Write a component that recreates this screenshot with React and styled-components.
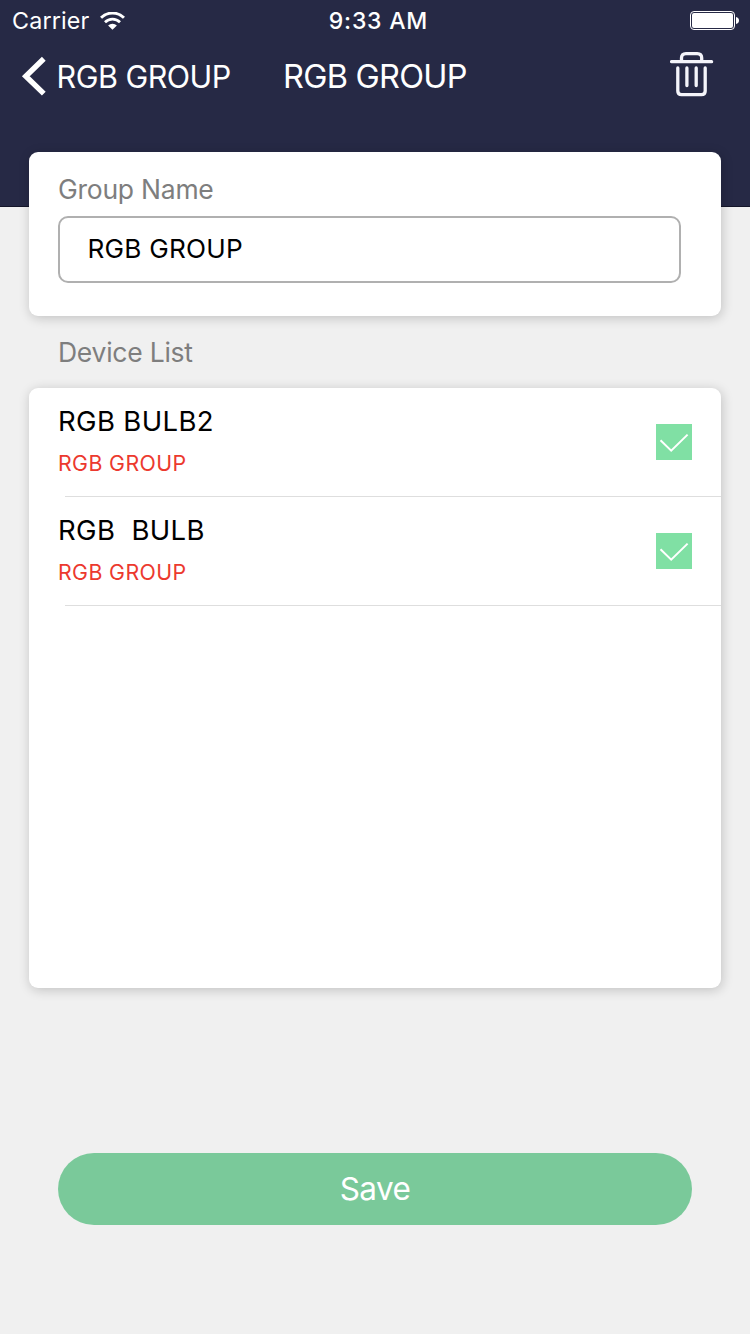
import React from "react";
import styled, { createGlobalStyle } from "styled-components";

const GlobalStyle = createGlobalStyle`
  * { box-sizing: border-box; }
  body {
    margin: 0;
    background: #f0f0f0;
    font-family: Inter, "Liberation Sans", sans-serif;
    font-weight: 400;
  }
`;

const Screen = styled.main`
  display: flex;
  flex-direction: column;
  width: 750px;
  height: 1334px;
  overflow: hidden;
  background: #f0f0f0;
`;

const Header = styled.header`
  flex: none;
  height: 207px;
  color: #fff;
  background: #262945;
  border-bottom: 1px solid #141529;
`;

const StatusBar = styled.div`
  display: grid;
  grid-template-columns: 1fr auto 1fr;
  align-items: center;
  height: 41px;
  padding: 0 11px 0 12px;
`;

const Carrier = styled.span`
  display: flex;
  align-items: center;
  gap: 11px;
  font-size: 23.3px;
  letter-spacing: 0.15px;
`;

const Time = styled.span`
  padding-left: 6px;
  font-size: 23px;
  font-weight: 500;
  letter-spacing: 0.8px;
`;

const StatusIcons = styled.span`
  display: flex;
  justify-content: flex-end;
`;

const NavBar = styled.nav`
  display: flex;
  align-items: center;
  height: 70px;
  padding: 0 36px 0 21px;
`;

const BackButton = styled.a`
  display: flex;
  align-items: center;
  width: 262px;
  gap: 9.5px;
  font-size: 30.5px;
  letter-spacing: -0.5px;
`;

const Title = styled.h1`
  flex: 1;
  margin: 0;
  font-size: 32.5px;
  font-weight: 400;
  letter-spacing: -0.75px;
`;

const Card = styled.section`
  flex: none;
  width: 692px;
  height: ${(p) => p.$height}px;
  margin: 0 29px;
  background: #fff;
  border-radius: 9px;
  box-shadow: 1px 2px 12px rgba(0, 0, 0, 0.2);
`;

const NameCard = styled(Card)`
  z-index: 1;
  margin-top: -55px;
  padding: 20px 40px 0 29px;
`;

const Label = styled.h2`
  margin: 0;
  font-size: 26.5px;
  line-height: 34px;
  font-weight: 400;
  letter-spacing: -0.25px;
  color: #7e7e7e;
`;

const NameInput = styled.div`
  display: flex;
  align-items: center;
  height: 67px;
  margin-top: 10px;
  padding: 0 27.5px 2px;
  border: 2px solid #b0b0b0;
  border-radius: 10px;
  font-size: 26.2px;
  letter-spacing: 0.2px;
  color: #000;
`;

const ListHeading = styled.div`
  flex: none;
  height: 72px;
  padding: 19px 58px 0;
`;

const DeviceRow = styled.div`
  display: flex;
  justify-content: space-between;
  height: ${(p) => p.$height}px;
  padding: 0 29px;
  background: linear-gradient(#dedede, #dedede) 36px 100% / 656px 1px no-repeat;
`;

const DeviceText = styled.div`
  display: flex;
  flex-direction: column;
  padding-top: 16px;
`;

const DeviceName = styled.span`
  font-size: 27.5px;
  line-height: 34px;
  letter-spacing: 0.35px;
  white-space: pre;
  color: #000;
`;

const DeviceGroup = styled.span`
  margin-top: 11px;
  font-size: 21.3px;
  line-height: 28px;
  letter-spacing: 0.4px;
  color: #ec392e;
`;

const CheckBox = styled.span`
  width: 36px;
  height: 36px;
  margin-top: 36px;
  background: #80e0a4;
`;

const SaveButton = styled.button`
  flex: none;
  width: 634px;
  height: 72px;
  margin: 165px 58px 0;
  padding: 0;
  border: 0;
  border-radius: 36px;
  background: #7ac99a;
  color: #fff;
  font-family: inherit;
  font-size: 31.5px;
  font-weight: 400;
  line-height: 72px;
  letter-spacing: -0.6px;
`;

const devices = [
  { name: "RGB BULB2", group: "RGB GROUP", height: 109 },
  { name: "RGB  BULB", group: "RGB GROUP", height: 109 },
];

const WifiIcon = () => (
  <svg width="25" height="18" viewBox="0 0 25 18" fill="none" stroke="#fff">
    <path d="M1 5.8A16.4 16.4 0 0 1 24 5.8" strokeWidth="3" />
    <path d="M5 10.2A10.6 10.6 0 0 1 20 10.2" strokeWidth="2.7" />
    <path d="M12.5 17.8L8.1 13.5A6.2 6.2 0 0 1 16.9 13.5Z" fill="#fff" stroke="none" />
  </svg>
);

const BatteryIcon = () => (
  <svg width="49" height="19" viewBox="0 0 49 19">
    <rect x="0.5" y="0.5" width="44" height="18" rx="3.5" fill="none" stroke="#fff" />
    <rect x="2" y="2" width="41" height="15" rx="2" fill="#fff" />
    <path d="M46 6C50 6.7 50 12.3 46 13Z" fill="#fff" />
  </svg>
);

const BackIcon = () => (
  <svg width="26" height="40" viewBox="0 0 26 40" fill="none" stroke="#fff" strokeWidth="5.4">
    <path d="M22.8 2.8L4.8 20.2L22.8 37.6" />
  </svg>
);

const TrashIcon = () => (
  <svg width="44" height="50" viewBox="0 0 44 50" fill="none" stroke="#f4f4fa" strokeWidth="3.3" strokeLinecap="round" strokeLinejoin="round">
    <path d="M1.6 10.7H41.6M11.5 10V7Q11.5 2.6 15.9 2.6H27.3Q31.7 2.6 31.7 7V10" />
    <path d="M7.8 17V40Q7.8 43.7 11.6 43.7H31.4Q35.2 43.7 35.2 40V17" />
    <path d="M16.9 17V34.5M26.2 17V34.5" />
  </svg>
);

const CheckIcon = () => (
  <svg width="36" height="36" viewBox="0 0 36 36" fill="none" stroke="#fff" strokeWidth="2">
    <path d="M4.5 16.2L15.2 26.6L31.6 10.6" />
  </svg>
);

export default function App() {
  return (
    <Screen>
      <GlobalStyle />
      <Header>
        <StatusBar>
          <Carrier>
            Carrier
            <WifiIcon />
          </Carrier>
          <Time>9:33 AM</Time>
          <StatusIcons>
            <BatteryIcon />
          </StatusIcons>
        </StatusBar>
        <NavBar>
          <BackButton>
            <BackIcon />
            RGB GROUP
          </BackButton>
          <Title>RGB GROUP</Title>
          <TrashIcon />
        </NavBar>
      </Header>
      <NameCard $height={164}>
        <Label>Group Name</Label>
        <NameInput>RGB GROUP</NameInput>
      </NameCard>
      <ListHeading>
        <Label>Device List</Label>
      </ListHeading>
      <Card $height={600}>
        {devices.map((d) => (
          <DeviceRow key={d.name} $height={d.height}>
            <DeviceText>
              <DeviceName>{d.name}</DeviceName>
              <DeviceGroup>{d.group}</DeviceGroup>
            </DeviceText>
            <CheckBox>
              <CheckIcon />
            </CheckBox>
          </DeviceRow>
        ))}
      </Card>
      <SaveButton>Save</SaveButton>
    </Screen>
  );
}
